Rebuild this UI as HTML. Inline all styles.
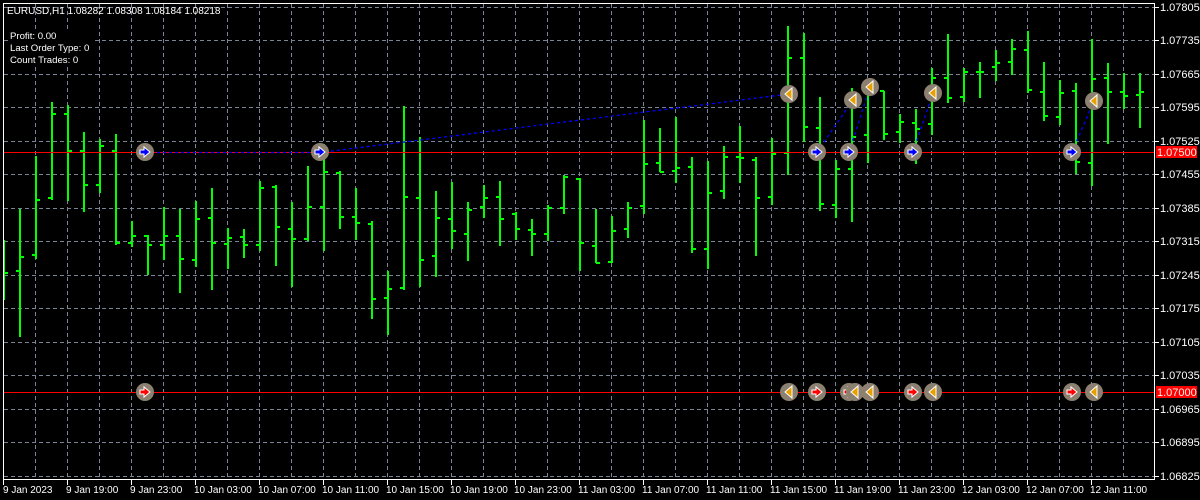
<!DOCTYPE html>
<html><head><meta charset="utf-8"><style>
html,body{margin:0;padding:0;background:#000;}
svg{display:block;}
text{font-family:"Liberation Sans",sans-serif;font-size:11px;fill:#fff;}
.t{font-size:10px;}
.h{font-size:9.6px;}
</style></head><body>
<svg width="1200" height="500" viewBox="0 0 1200 500" xmlns="http://www.w3.org/2000/svg" shape-rendering="crispEdges">
<rect width="1200" height="500" fill="#000"/>
<defs>
<g id="buy"><circle r="9" fill="#8c8070" shape-rendering="auto"/><path d="M-5,-2H-1V-5L5,0L-1,5V2H-5Z" fill="#0000ff" stroke="#fff" stroke-width="1" shape-rendering="auto"/></g>
<g id="sell"><circle r="9" fill="#8c8070" shape-rendering="auto"/><path d="M3,-6V6L-4,0Z" fill="#e8a000" stroke="#fff" stroke-width="1" shape-rendering="auto"/></g>
<g id="bclose"><circle r="9" fill="#8c8070" shape-rendering="auto"/><path d="M-5,-2H-1V-5L5,0L-1,5V2H-5Z" fill="#ff0000" stroke="#fff" stroke-width="1" shape-rendering="auto"/></g>
</defs>
<g stroke="#7a8494" stroke-width="1" stroke-dasharray="4,3">
<path d="M4 7.5H1154M4 40.5H1154M4 74.5H1154M4 107.5H1154M4 141.5H1154M4 174.5H1154M4 208.5H1154M4 241.5H1154M4 275.5H1154M4 308.5H1154M4 342.5H1154M4 375.5H1154M4 409.5H1154M4 442.5H1154M4 476.5H1154"/>
<path d="M35.5 4V479M67.5 4V479M99.5 4V479M131.5 4V479M163.5 4V479M195.5 4V479M227.5 4V479M259.5 4V479M291.5 4V479M323.5 4V479M355.5 4V479M387.5 4V479M419.5 4V479M451.5 4V479M483.5 4V479M515.5 4V479M547.5 4V479M579.5 4V479M611.5 4V479M643.5 4V479M675.5 4V479M707.5 4V479M739.5 4V479M771.5 4V479M803.5 4V479M835.5 4V479M867.5 4V479M899.5 4V479M931.5 4V479M963.5 4V479M995.5 4V479M1027.5 4V479M1059.5 4V479M1091.5 4V479M1123.5 4V479"/>
</g>
<path fill="none" stroke="#00ff00" stroke-width="2" d="M4 240V300M4 273H8
M20 209V337M16 271H20M20 257H24
M36 156V259M32 255H36M36 200H40
M52 102V200M48 198H52M52 114H56
M68 105V201M64 114H68M68 151H72
M84 132V212M80 151H84M84 185H88
M100 139V193M96 185H100M100 146H104
M116 134V245M112 151H116M116 243H120
M132 221V247M128 243H132M132 236H136
M148 235V275M144 236H148M148 245H152
M164 207V260M160 245H164M164 236H168
M180 209V293M176 236H180M180 259H184
M196 201V267M192 260H196M196 219H200
M212 188V290M208 218H212M212 243H216
M228 228V269M224 244H228M228 238H232
M244 229V258M240 237H244M244 245H248
M260 181V251M256 245H260M260 188H264
M276 185V266M272 187H276M276 227H280
M292 202V287M288 229H292M292 239H296
M308 166V241M304 239H308M308 207H312
M324 144V251M320 207H324M324 172H328
M340 171V229M336 173H340M340 217H344
M356 188V240M352 217H356M356 223H360
M372 221V319M368 224H372M372 299H376
M388 271V335M384 298H388M388 289H392
M404 106V290M400 288H404M404 197H408
M420 137V287M416 198H420M420 260H424
M436 191V277M432 256H436M436 218H440
M452 182V249M448 219H452M452 231H456
M468 202V261M464 234H468M468 210H472
M484 185V218M480 207H484M484 198H488
M500 181V246M496 197H500M500 219H504
M516 212V240M512 214H516M516 229H520
M532 219V256M528 230H532M532 234H536
M548 205V241M544 234H548M548 208H552
M564 175V214M560 208H564M564 177H568
M580 178V271M576 179H580M580 243H584
M596 209V263M592 246H596M596 263H600
M612 216V263M608 262H612M612 231H616
M628 202V238M624 229H628M628 208H632
M644 120V214M640 206H644M644 164H648
M660 128V172M656 163H660M660 172H664
M676 117V183M672 171H676M676 168H680
M692 157V253M688 167H692M692 249H696
M708 161V269M704 249H708M708 193H712
M724 146V199M720 191H724M724 157H728
M740 126V183M736 157H740M740 158H744
M756 157V256M752 160H756M756 198H760
M772 138V205M768 197H772M772 154H776
M788 26V175M784 153H788M788 58H792
M804 33V142M800 58H804M804 127H808
M820 97V211M816 128H820M820 204H824
M836 160V218M832 205H836M836 169H840
M852 88V222M848 169H852M852 137H856
M868 88V163M864 135H868M868 92H872
M884 91V140M880 91H884M884 134H888
M900 114V143M896 132H900M900 122H904
M916 109V164M912 123H916M916 129H920
M932 68V135M928 124H932M932 78H936
M948 34V103M944 78H948M948 98H952
M964 68V102M960 97H964M964 72H968
M980 62V98M976 72H980M980 72H984
M996 50V81M992 67H996M996 63H1000
M1012 39V75M1008 62H1012M1012 49H1016
M1028 31V93M1024 50H1028M1028 90H1032
M1044 62V121M1040 92H1044M1044 116H1048
M1060 80V125M1056 117H1060M1060 93H1064
M1076 83V174M1072 91H1076M1076 162H1080
M1092 39V186M1088 163H1092M1092 79H1096
M1108 63V144M1104 78H1108M1108 92H1112
M1124 73V109M1120 92H1124M1124 96H1128
M1140 73V128M1136 95H1140M1140 92H1144"/>
<path stroke="#ff0000" stroke-width="1" d="M4 152.5H1154M4 392.5H1154"/>
<g stroke="#0000ff" stroke-width="1.3" stroke-dasharray="3,3" fill="none" shape-rendering="auto">
<path d="M145 152.5L320 152.5L789 94"/>
<path d="M817 152L853 100M849 152L870 87M913 152L933 93M1072 152L1094 101"/>
</g>
<use href="#buy" x="145" y="152"/><use href="#buy" x="320" y="152"/>
<use href="#sell" x="789" y="94"/><use href="#sell" x="853" y="100"/><use href="#sell" x="870" y="87"/><use href="#sell" x="933" y="93"/><use href="#sell" x="1094" y="101"/>
<use href="#buy" x="817" y="152"/><use href="#buy" x="849" y="152"/><use href="#buy" x="913" y="152"/><use href="#buy" x="1072" y="152"/>
<use href="#bclose" x="145" y="392"/><use href="#sell" x="789" y="392"/><use href="#bclose" x="817" y="392"/><use href="#bclose" x="849" y="392"/><use href="#sell" x="855" y="392"/><use href="#sell" x="870" y="392"/><use href="#bclose" x="913" y="392"/><use href="#sell" x="933" y="392"/><use href="#bclose" x="1072" y="392"/><use href="#sell" x="1094" y="392"/>
<path stroke="#fff" stroke-width="1" fill="none" d="M3.5 3.5H1154.5V479.5H3.5Z"/>
<path stroke="#fff" d="M1155 7.5H1159M1155 40.5H1159M1155 74.5H1159M1155 107.5H1159M1155 141.5H1159M1155 174.5H1159M1155 208.5H1159M1155 241.5H1159M1155 275.5H1159M1155 308.5H1159M1155 342.5H1159M1155 375.5H1159M1155 409.5H1159M1155 442.5H1159M1155 476.5H1159"/>
<g>
<text x="1160" y="11">1.07805</text><text x="1160" y="44">1.07735</text><text x="1160" y="78">1.07665</text><text x="1160" y="111">1.07595</text><text x="1160" y="145">1.07525</text><text x="1160" y="178">1.07455</text><text x="1160" y="212">1.07385</text><text x="1160" y="245">1.07315</text><text x="1160" y="279">1.07245</text><text x="1160" y="312">1.07175</text><text x="1160" y="346">1.07105</text><text x="1160" y="379">1.07035</text><text x="1160" y="413">1.06965</text><text x="1160" y="446">1.06895</text><text x="1160" y="480">1.06825</text>
</g>
<rect x="1156" y="146" width="41" height="12" fill="#ff0000"/><text x="1157" y="156" style="fill:#fff0e8">1.07500</text>
<rect x="1156" y="386" width="41" height="12" fill="#ff0000"/><text x="1157" y="396" style="fill:#fff0e8">1.07000</text>
<path stroke="#fff" d="M3.5 480V485M67.5 480V485M131.5 480V485M195.5 480V485M259.5 480V485M323.5 480V485M387.5 480V485M451.5 480V485M515.5 480V485M579.5 480V485M643.5 480V485M707.5 480V485M771.5 480V485M835.5 480V485M899.5 480V485M963.5 480V485M1027.5 480V485M1091.5 480V485"/>
<g class="t">
<text class="t" x="3" y="493">9 Jan 2023</text><text class="t" x="66" y="493">9 Jan 19:00</text><text class="t" x="130" y="493">9 Jan 23:00</text><text class="t" x="194" y="493">10 Jan 03:00</text><text class="t" x="258" y="493">10 Jan 07:00</text><text class="t" x="322" y="493">10 Jan 11:00</text><text class="t" x="386" y="493">10 Jan 15:00</text><text class="t" x="450" y="493">10 Jan 19:00</text><text class="t" x="514" y="493">10 Jan 23:00</text><text class="t" x="578" y="493">11 Jan 03:00</text><text class="t" x="642" y="493">11 Jan 07:00</text><text class="t" x="706" y="493">11 Jan 11:00</text><text class="t" x="770" y="493">11 Jan 15:00</text><text class="t" x="834" y="493">11 Jan 19:00</text><text class="t" x="898" y="493">11 Jan 23:00</text><text class="t" x="962" y="493">12 Jan 03:00</text><text class="t" x="1026" y="493">12 Jan 07:00</text><text class="t" x="1090" y="493">12 Jan 11:00</text>
</g>
<rect x="8" y="30" width="84" height="35" fill="#000"/>
<text class="t" x="7" y="14">EURUSD,H1  1.08282 1.08308 1.08184 1.08218</text>
<text class="h" x="10" y="39">Profit: 0.00</text>
<text class="h" x="10" y="51">Last Order Type: 0</text>
<text class="h" x="10" y="63">Count Trades: 0</text>
</svg>
</body></html>
